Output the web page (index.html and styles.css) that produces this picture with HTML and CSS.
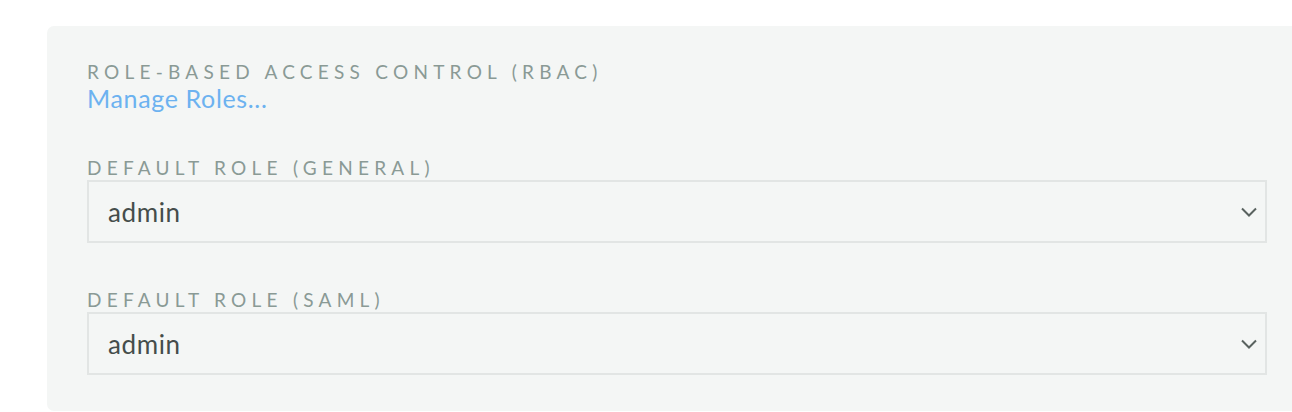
FILE: index.html
```html
<!DOCTYPE html>
<html lang="en">
<head>
<meta charset="utf-8">
<title>RBAC</title>
<link rel="stylesheet" href="styles.css">
</head>
<body>
<div class="panel">
  <div class="label">Role-based access control (RBAC)</div>
  <a class="link" href="#">Manage Roles...</a>
  <div class="field">
    <div class="label">Default role (general)</div>
    <div class="select">
      <span class="value">admin</span>
      <svg class="chev" width="16" height="10" viewBox="0 0 16 10"><path d="M1 1.5 L8 8.5 L15 1.5" fill="none" stroke="#59625f" stroke-width="2"/></svg>
    </div>
  </div>
  <div class="field">
    <div class="label">Default role (SAML)</div>
    <div class="select">
      <span class="value">admin</span>
      <svg class="chev" width="16" height="10" viewBox="0 0 16 10"><path d="M1 1.5 L8 8.5 L15 1.5" fill="none" stroke="#59625f" stroke-width="2"/></svg>
    </div>
  </div>
</div>
</body>
</html>
```
FILE: styles.css
```css
html, body {
  margin: 0;
  padding: 0;
  background: #ffffff;
  overflow: hidden;
}
body {
  font-family: "Lato", "Open Sans", sans-serif;
  padding-top: 26px;
  padding-left: 47px;
  height: 412px;
  box-sizing: border-box;
}
.panel {
  width: 1260px;
  height: 385px;
  box-sizing: border-box;
  background: #f4f6f5;
  border-radius: 7px 0 0 7px;
  padding: 34px 40px 36px 40px;
}
.label {
  font-size: 19px;
  line-height: 24px;
  letter-spacing: 5.25px;
  text-transform: uppercase;
  color: #8a9a95;
  white-space: nowrap;
}
.link {
  display: block;
  font-size: 25px;
  line-height: 28px;
  letter-spacing: 0.65px;
  color: #6cb2f0;
  text-decoration: none;
}
.field {
  margin-top: 44px;
}
.field + .field {
  margin-top: 45px;
}
.select {
  height: 63px;
  box-sizing: border-box;
  border: 2px solid #e2e5e4;
  display: flex;
  align-items: center;
  justify-content: space-between;
  padding: 0 8px 0 19px;
}
.value {
  font-size: 26px;
  letter-spacing: 0.6px;
  color: #454d4b;
}
.chev {
  display: block;
}
```
